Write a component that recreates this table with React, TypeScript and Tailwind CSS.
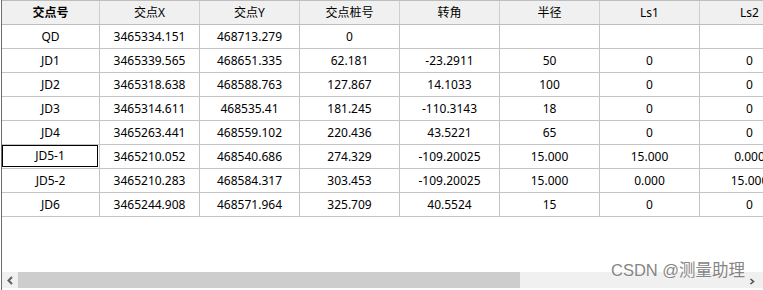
import React from "react";

const headers = ["交点号", "交点X", "交点Y", "交点桩号", "转角", "半径", "Ls1", "Ls2"];
const rows: string[][] = [
  ["QD", "3465334.151", "468713.279", "0", "", "", "", ""],
  ["JD1", "3465339.565", "468651.335", "62.181", "-23.2911", "50", "0", "0"],
  ["JD2", "3465318.638", "468588.763", "127.867", "14.1033", "100", "0", "0"],
  ["JD3", "3465314.611", "468535.41", "181.245", "-110.3143", "18", "0", "0"],
  ["JD4", "3465263.441", "468559.102", "220.436", "43.5221", "65", "0", "0"],
  ["JD5-1", "3465210.052", "468540.686", "274.329", "-109.20025", "15.000", "15.000", "0.000"],
  ["JD5-2", "3465210.283", "468584.317", "303.453", "-109.20025", "15.000", "0.000", "15.000"],
  ["JD6", "3465244.908", "468571.964", "325.709", "40.5524", "15", "0", "0"],
];

const font = { fontFamily: '"Noto Sans", "Noto Sans CJK SC", sans-serif' };

export default function App() {
  return (
    <div
      className="relative w-[763px] h-[290px] overflow-hidden bg-white text-black text-[12px]"
      style={font}
    >
      <div className="flex h-full pl-px">
        <div className="flex flex-col h-full w-full border-l border-[#6e6e6e] overflow-hidden">
          {/* table */}
          <div className="flex flex-col w-[1000px]">
            <div className="flex h-[25px] bg-[#f0f0f0] border-t border-b border-[#bdbdbd]">
              {headers.map((h, i) => (
                <div
                  key={h}
                  className={`${i === 0 ? "w-[98px] font-bold" : "w-[100px]"} shrink-0 flex items-center justify-center border-r border-[#cfcfcf] leading-none`}
                >
                  {h}
                </div>
              ))}
            </div>
            {rows.map((r, ri) => (
              <div key={ri} className="flex h-[24px] border-b border-[#c4c4c4]">
                {r.map((c, ci) => (
                  <div
                    key={ci}
                    className={`${ci === 0 ? "w-[98px]" : "w-[100px]"} shrink-0 flex items-center justify-center border-r border-[#c4c4c4] leading-none`}
                  >
                    {ri === 5 && ci === 0 ? (
                      <div className="w-[96px] h-[22px] mr-[1px] mt-[-1px] border border-black flex items-center justify-center">
                        {c}
                      </div>
                    ) : (
                      c
                    )}
                  </div>
                ))}
              </div>
            ))}
          </div>
          <div className="flex-1" />
          {/* scrollbar */}
          <div className="flex h-[16px] mb-[2px] bg-[#f0f0f0]">
            <div className="w-[16px] flex items-center justify-center">
              <svg width="8" height="9" viewBox="0 0 8 9">
                <polyline points="6,1 2.5,4.5 6,8" fill="none" stroke="#606060" strokeWidth="2" />
              </svg>
            </div>
            <div className="w-[502px] bg-[#cdcdcd]" />
            <div className="flex-1" />
            <div className="w-[16px] flex items-center justify-center mr-[3px] mt-[2px]">
              <svg width="6" height="7" viewBox="0 0 6 7">
                <polyline points="1.5,1 4.5,3.5 1.5,6" fill="none" stroke="#505050" strokeWidth="1.6" />
              </svg>
            </div>
          </div>
        </div>
      </div>
      <div
        className="absolute left-[611px] top-[262px] text-[16.5px] text-[#858585] leading-none whitespace-nowrap"
        style={{ fontFamily: '"Liberation Sans", "Noto Sans CJK SC", sans-serif', textShadow: "0 0 2px #fff" }}
      >
        CSDN @测量助理
      </div>
    </div>
  );
}
